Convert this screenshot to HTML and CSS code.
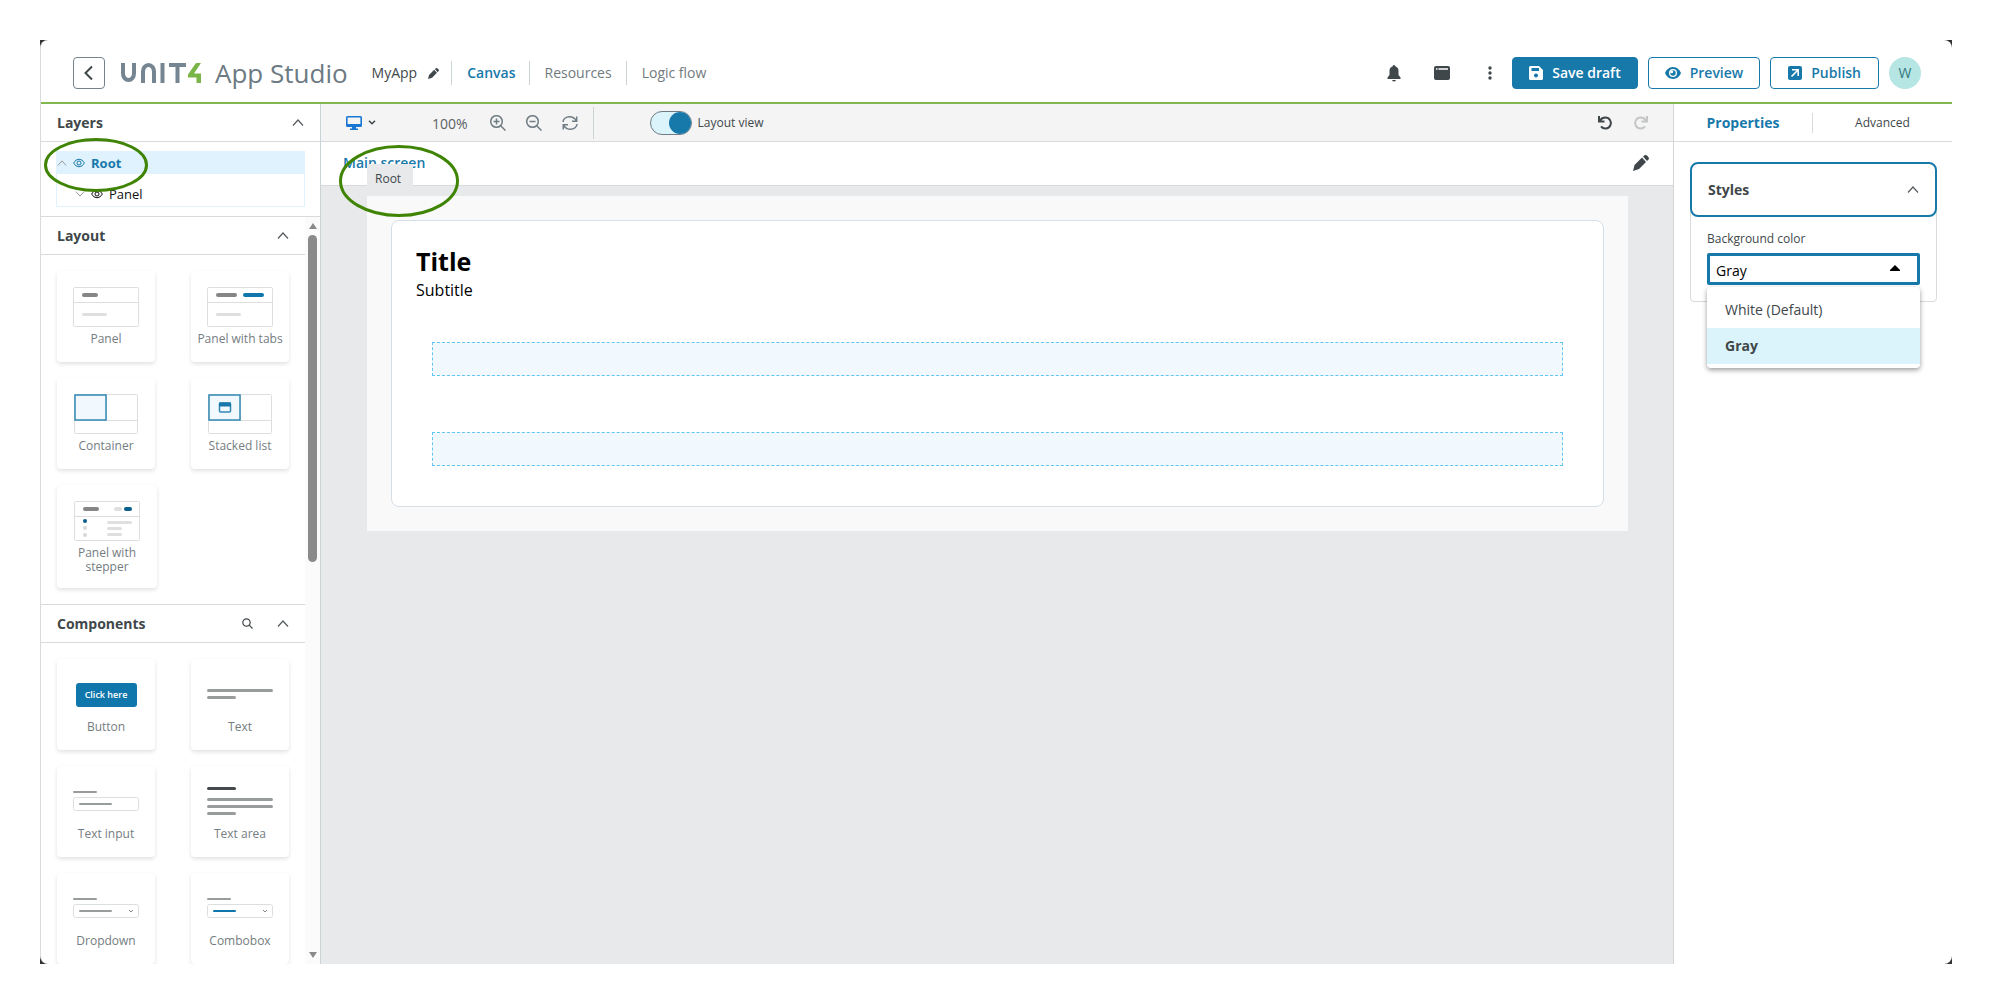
FILE: index.html
```html
<!DOCTYPE html>
<html lang="en">
<head>
<meta charset="utf-8">
<title>App Studio</title>
<link rel="stylesheet" href="styles.css">
</head>
<body>
<div class="window">
<div class="app">
  <header class="header">
    <button class="back" aria-label="Back"><svg width="12" height="16" viewBox="0 0 12 16" fill="none" stroke="#40474a" stroke-width="2"><path d="M9 1.500 2.500 8 9 14.500"/></svg></button>
    <div class="brand">
      <svg class="logo" width="82" height="20" viewBox="0 0 82 20" fill="none" stroke="#758592" stroke-width="4" role="img" aria-label="Unit4"><path d="M3 0v10.500a5.500 6.500 0 0 0 11 0V0M23 20V8.500a5.500 6.500 0 0 1 11 0V20M42.500 0v20M49 2h17M57.500 2v18"/><path fill="#7ab547" stroke="none" d="M76 0h5L74 10.500h7V20h-4.500v-5.500H68V11.500Z"/></svg>
      <span class="product">App Studio</span>
    </div>
    <span class="appname">MyApp</span>
    <button class="icon rename" aria-label="Rename"><svg width="11" height="11" viewBox="0 0 16 16" fill="#40474a"><path d="M0 16 1.500 10 9 2.500 13 7 6 14ZM10 1.500 11.500.300Q13-.500 14.500 1L15.300 2Q16.500 3.500 15.500 4.500L14 6Z"/></svg></button>
    <nav class="nav">
      <a class="active" href="#canvas">Canvas</a><a href="#resources">Resources</a><a href="#logic">Logic flow</a>
    </nav>
    <div class="actions">
      <button class="icon" aria-label="Notifications"><svg width="16" height="18" viewBox="0 0 16 18" fill="#40474a"><path d="M8 1q1.500 0 1.500 1.500C11.800 3.200 12.500 5 12.500 7v4l2 2.500V15h-13v-1.500l2-2.500V7c0-2 .7-3.800 3-4.500Q6.500 1 8 1ZM6 16h4q-.500 1.500-2 1.500T6 16Z"/></svg></button>
      <button class="icon" aria-label="Window"><svg width="16" height="16" viewBox="0 0 16 16"><rect y="1" width="16" height="14" rx="2" fill="#40474a"/><path d="M2 4h1.500M4.500 4H14" stroke="#fff" stroke-width="1.500"/></svg></button>
      <button class="icon more" aria-label="More"><svg width="4" height="16" viewBox="0 0 4 16" fill="#40474a"><circle cx="2" cy="3" r="1.700"/><circle cx="2" cy="8" r="1.700"/><circle cx="2" cy="13" r="1.700"/></svg></button>
      <button class="btn primary"><svg width="14" height="14" viewBox="0 0 14 14"><path fill="#fff" fill-rule="evenodd" d="M1.500 0H10l4 4v8.500q0 1.500-1.500 1.500h-11Q0 14 0 12.500v-11Q0 0 1.500 0ZM2.500 2v3H10V2ZM7 7.500a2 2 0 1 0 .010 0Z"/></svg>Save draft</button>
      <button class="btn preview"><svg width="16" height="14" viewBox="0 0 16 14"><path fill="#1779aa" d="M8 1C4 1 1.200 4 0 7c1.200 3 4 6 8 6s6.800-3 8-6C14.800 4 12 1 8 1Z"/><circle cx="8" cy="7" r="4" fill="#fff"/><circle cx="8" cy="7" r="2.700" fill="#1779aa"/><circle cx="6.700" cy="5.700" r="1.500" fill="#fff"/></svg>Preview</button>
      <button class="btn"><svg width="14" height="14" viewBox="0 0 14 14"><rect width="14" height="14" rx="2" fill="#1779aa"/><path d="M4 3.800h6.200V10M10 4 3.500 10.500" fill="none" stroke="#fff" stroke-width="1.600"/></svg>Publish</button>
      <button class="avatar">W</button>
    </div>
  </header>

  <main class="workspace">
    <aside class="sidebar">
      <div class="section-head layers-head"><h2>Layers</h2><button class="icon" aria-label="Collapse layers"><svg class="chev" viewBox="0 0 12 7"><path d="M1 6.500 6 1l5 5.500"/></svg></button></div>
      <div class="layers">
        <ul class="tree">
          <li class="node selected"><svg class="caret" viewBox="0 0 12 7"><path d="M1 6.500 6 1l5 5.500"/></svg><svg class="eye" viewBox="0 0 12 10"><path d="M.600 5Q2.500 1.200 6 1.200T11.400 5Q9.500 8.800 6 8.800T.600 5Z"/><circle cx="6" cy="5" r="2"/></svg>Root</li>
          <li class="node child"><svg class="caret" viewBox="0 0 12 7"><path d="M1 .500 6 6l5-5.500"/></svg><svg class="eye" viewBox="0 0 12 10"><path d="M.600 5Q2.500 1.200 6 1.200T11.400 5Q9.500 8.800 6 8.800T.600 5Z"/><circle cx="6" cy="5" r="2"/></svg>Panel</li>
        </ul>
        <svg class="mark mark-tree" viewBox="0 0 104 54"><ellipse cx="52" cy="27" rx="50.500" ry="25.500"/></svg>
      </div>
      <div class="scroller">
        <div class="palette">
          <div class="section-head"><h2>Layout</h2><button class="icon" aria-label="Collapse layout"><svg class="chev" viewBox="0 0 12 7"><path d="M1 6.500 6 1l5 5.500"/></svg></button></div>
          <div class="tiles">
            <div class="tile"><svg viewBox="0 0 66 40"><g class="frame"><rect x=".5" y=".5" width="65" height="39" rx="1"/><path d="M0 15.500h66"/></g><path class="g4" d="M11 8h12"/><path class="l3" d="M10.500 27.500h22"/></svg><span>Panel</span></div>
            <div class="tile"><svg viewBox="0 0 66 40"><g class="frame"><rect x=".5" y=".5" width="65" height="39" rx="1"/><path d="M0 15.500h66"/></g><path class="g4" d="M11 8h17"/><path class="b4" d="M38 8h17"/><path class="l3" d="M10.500 27.500h22"/></svg><span>Panel with tabs</span></div>
            <div class="tile"><svg viewBox="0 0 66 40"><g class="frame"><path d="M33.500 0v26"/><rect x="1.500" y=".5" width="63" height="39" rx="1"/><path d="M2 26.500h62"/></g><rect class="cell" x="2" y="1" width="31" height="25"/></svg><span>Container</span></div>
            <div class="tile"><svg viewBox="0 0 66 40"><g class="frame"><path d="M33.500 0v26"/><rect x="1.500" y=".5" width="63" height="39" rx="1"/><path d="M2 26.500h62"/></g><rect class="cell" x="2" y="1" width="31" height="25"/><rect class="cell" x="12.500" y="9" width="11" height="9" rx="1"/><path d="M12 10.500h12" stroke="#1779aa" stroke-width="4"/></svg><span>Stacked list</span></div>
            <div class="tile tall"><svg viewBox="0 0 66 40"><g class="frame"><rect x=".5" y=".5" width="65" height="39" rx="1"/><path d="M0 15.500h66"/></g><path class="g4" d="M11 8h12"/><path class="l4" d="M42 8h4"/><path class="n4" d="M52 8h4"/><circle cx="11" cy="20" r="2" fill="#0b5f8c"/><circle cx="11" cy="27" r="2" fill="#d8d8d8"/><circle cx="11" cy="34" r="2" fill="#d8d8d8"/><path class="l3" d="M34.500 21.500h22M34.500 27.500h12M34.500 33.500h12"/></svg><span>Panel with stepper</span></div>
          </div>
          <div class="section-head components-head"><h2>Components</h2><button class="icon search" aria-label="Search components"><svg width="11" height="11" viewBox="0 0 11 11" fill="none" stroke="#40474a" stroke-width="1.200"><circle cx="4.500" cy="4.500" r="3.700"/><path d="m7.200 7.200 3.300 3.300"/></svg></button><button class="icon" aria-label="Collapse components"><svg class="chev" viewBox="0 0 12 7"><path d="M1 6.500 6 1l5 5.500"/></svg></button></div>
          <div class="tiles">
            <div class="tile"><div class="art"><span class="sample">Click here</span></div><span>Button</span></div>
            <div class="tile"><svg viewBox="0 0 66 40"><path class="t3" d="M1.500 15.500h63M1.500 22.500h26"/></svg><span>Text</span></div>
            <div class="tile"><svg viewBox="0 0 66 40"><path class="t2" d="M1 10h22M7 22h31"/><rect class="frame" x=".5" y="15.500" width="65" height="13" rx="2"/></svg><span>Text input</span></div>
            <div class="tile"><svg viewBox="0 0 66 40"><path class="t3 dark" d="M1.500 6.500h26"/><path class="t3" d="M1.500 17.500h63M1.500 24.500h63M1.500 31.500h26"/></svg><span>Text area</span></div>
            <div class="tile"><svg viewBox="0 0 66 40"><path class="t2" d="M1 10h22M7 22h31"/><rect class="frame" x=".5" y="15.500" width="65" height="13" rx="2"/><path class="mini" d="m56 21 2 2 2-2"/></svg><span>Dropdown</span></div>
            <div class="tile"><svg viewBox="0 0 66 40"><path class="t2" d="M1 10h22"/><path class="t2 blue" d="M7 22h21"/><rect class="frame" x=".5" y="15.500" width="65" height="13" rx="2"/><path class="mini" d="m56 21 2 2 2-2"/></svg><span>Combobox</span></div>
          </div>
        </div>
        <div class="rail">
          <svg width="8" height="6" viewBox="0 0 8 6"><path d="M4 0 8 6H0Z"/></svg>
          <div class="track"><div class="thumb"></div></div>
          <svg width="8" height="6" viewBox="0 0 8 6"><path d="M0 0h8L4 6Z"/></svg>
        </div>
      </div>
    </aside>

    <section class="stage">
      <div class="toolbar">
        <button class="icon device" aria-label="Device"><svg width="16" height="14" viewBox="0 0 16 14"><path fill="#1976d2" fill-rule="evenodd" d="M1.500 0h13Q16 0 16 1.500v8q0 1.500-1.500 1.500H10v1.500h2V14H4v-1.500h2V11H1.500Q0 11 0 9.500v-8Q0 0 1.500 0ZM1.600 1.600v6.400h12.800V1.600Z"/></svg><svg width="8" height="5" viewBox="0 0 8 5" fill="none" stroke="#40474a" stroke-width="1.500"><path d="m1 .8 3 3 3-3"/></svg></button>
        <span class="zoom">100%</span>
        <button class="icon" aria-label="Zoom in"><svg class="line" viewBox="0 0 16 16"><circle cx="6.500" cy="6.500" r="5.800"/><path d="m10.700 10.700 4.800 4.800M3.500 6.500h6M6.500 3.500v6"/></svg></button>
        <button class="icon" aria-label="Zoom out"><svg class="line" viewBox="0 0 16 16"><circle cx="6.500" cy="6.500" r="5.800"/><path d="m10.700 10.700 4.800 4.800M3.500 6.500h6"/></svg></button>
        <button class="icon refresh" aria-label="Reset zoom"><svg class="line" viewBox="0 0 16 16"><path d="M1 7C1 4 4 1.700 7.500 1.700c2.800 0 5.200 1.300 6.800 4M14.700 1.500v4.700H10M15 9c0 3-3 5.300-6.500 5.300-2.800 0-5.200-1.300-6.800-4M1.300 14.500V9.800H6"/></svg></button>
        <label class="switch"><input type="checkbox" checked><span class="slot"></span>Layout view</label>
        <div class="history">
          <button class="icon" aria-label="Undo"><svg width="16" height="16" viewBox="0 0 16 16" fill="none" stroke="#40474a" stroke-width="2"><path d="M3 5.500C4.300 3.300 6.300 2.500 8.500 2.500a5.500 5.500 0 1 1-4.500 8.800M2 1v5.500h5.500"/></svg></button>
          <button class="icon" aria-label="Redo" disabled><svg width="16" height="16" viewBox="0 0 16 16" fill="none" stroke="#c4c6c7" stroke-width="2"><path d="M13 5.500C11.700 3.300 9.700 2.500 7.500 2.500a5.500 5.500 0 1 0 4.500 8.800M14 1v5.500H8.500"/></svg></button>
        </div>
      </div>
      <div class="screens">
        <a href="#main">Main screen</a>
        <button class="icon" aria-label="Edit screen"><svg width="16" height="16" viewBox="0 0 16 16" fill="#40474a"><path d="M0 16 1.500 10 9 2.500 13 7 6 14ZM10 1.500 11.500.300Q13-.500 14.500 1L15.300 2Q16.500 3.500 15.500 4.500L14 6Z"/></svg></button>
      </div>
      <div class="board">
        <div class="root">
          <span class="tag">Root</span>
          <svg class="mark mark-tag" viewBox="0 0 120 72"><ellipse cx="60" cy="36" rx="58.500" ry="34.500"/></svg>
          <article class="panel">
            <h1>Title</h1>
            <p>Subtitle</p>
            <div class="drop"></div>
            <div class="drop"></div>
          </article>
        </div>
      </div>
    </section>

    <aside class="props">
      <nav class="tabs"><a class="on" href="#properties">Properties</a><a href="#advanced">Advanced</a></nav>
      <div class="group">
        <button class="group-head">Styles<svg class="chev" viewBox="0 0 12 7"><path d="M1 6.500 6 1l5 5.500"/></svg></button>
        <div class="group-body">
          <label for="bg">Background color</label>
          <div class="field">
            <select id="bg"><option>White (Default)</option><option selected>Gray</option></select>
            <svg class="arrow" width="10" height="6" viewBox="0 0 10 6"><path d="M5 0 10 5v1H0V5Z"/></svg>
            <ul class="menu"><li>White (Default)</li><li class="picked">Gray</li></ul>
          </div>
        </div>
      </div>
    </aside>
  </main>
</div>
</div>
</body>
</html>
```
FILE: styles.css
```css
* { box-sizing: border-box; }
body { margin: 0; background: #fff; color: #40474a; font: 14px/20px "Open Sans", "Noto Sans", sans-serif; }
h1, h2, p, ul { margin: 0; padding: 0; }
ul { list-style: none; }
a { color: inherit; text-decoration: none; }
button { font: inherit; color: inherit; cursor: pointer; }
svg { display: block; flex: none; }
.icon { display: flex; align-items: center; padding: 0; border: 0; background: none; }
.chev { width: 12px; height: 7px; fill: none; stroke: #555b5e; stroke-width: 1.2; }

.window { height: 100vh; padding: 40px; background: linear-gradient(#333, #333) content-box, #fff; }
.app { height: 100%; display: flex; flex-direction: column; overflow: hidden; border-radius: 8px; background: #fff; border-left: 1px solid #d8dadb; }

.header { flex: none; display: flex; align-items: center; height: 64px; padding: 10px 31px 6px 32px; border-bottom: 2px solid #82b650; }
.back { width: 32px; height: 32px; display: grid; place-items: center; padding: 0; background: #fff; border: 1px solid #75838c; border-radius: 4px; }
.brand { display: flex; align-items: center; gap: 13px; margin-left: 15px; }
.product { font-size: 26px; line-height: 32px; color: #6b7a83; }
.appname { margin-left: 24px; }
.rename { margin-left: 11px; }
.nav { display: flex; margin-left: 12px; line-height: 24px; color: #717b80; }
.nav a { padding: 0 14px 0 15px; border-left: 1px solid #ccd3d7; }
.nav .active { padding-right: 13px; color: #1779aa; font-weight: 600; }
.actions { display: flex; align-items: center; margin-left: auto; gap: 10px; }
.actions .icon { margin-right: 22px; }
.actions .more { margin: 0 10px 0 6px; }
.btn { display: flex; align-items: center; gap: 9px; height: 32px; padding: 0 17px; font-weight: 600; color: #1779aa; background: #fff; border: 1px solid #1779aa; border-radius: 4px; }
.primary { padding: 0 16px; background: #1779aa; color: #fff; }
.preview { padding: 0 16px; }
.avatar { width: 32px; height: 32px; padding: 0; border: 0; border-radius: 50%; background: #b5e6e4; color: #33787d; }

.workspace { flex: 1; min-height: 0; display: grid; grid-template-columns: 280px minmax(0, 1fr) 279px; }

.sidebar { display: flex; flex-direction: column; min-height: 0; border-right: 1px solid #ccd3d7; }
.section-head { flex: none; display: flex; align-items: center; height: 38px; padding: 0 16px; border-bottom: 1px solid #d8dadb; }
.section-head h2 { margin-right: auto; font-size: 14px; line-height: 20px; font-weight: 700; }
.layers { flex: none; position: relative; padding: 9px 15px; border-bottom: 1px solid #d8dadb; }
.tree { border: 1px solid #dff2fd; font-size: 13px; color: #111; }
.node { display: flex; align-items: center; gap: 6px; height: 22px; }
.node.selected { background: #dff2fd; color: #1779aa; font-weight: 700; }
.node.child { height: 32px; padding: 8px 0 0 18px; }
.caret { width: 10px; height: 6px; fill: none; stroke: #999; stroke-width: 1.2; }
.eye { width: 12px; height: 10px; fill: none; stroke: currentColor; }
.mark { position: absolute; z-index: 3; fill: none; stroke: #3f8405; stroke-width: 3; pointer-events: none; }
.mark-tree { width: 104px; height: 54px; left: 3px; top: -4px; }

.scroller { flex: 1; min-height: 0; display: flex; overflow: hidden; }
.palette { flex: 1; min-width: 0; }
.tiles { display: grid; grid-template-columns: 98px 98px; gap: 16px 36px; padding: 16px; }
.tile { min-height: 91px; padding: 16px; border-radius: 4px; background: #fff; box-shadow: 0 2px 4px rgba(0, 0, 0, .12); display: flex; flex-direction: column; align-items: center; font-size: 12px; line-height: 14px; text-align: center; color: #747d81; }
.tile > svg, .art { width: 66px; height: 40px; flex: none; fill: none; }
.tile > span { margin: 5px -12px 0; white-space: nowrap; }
.tile.tall { width: 100px; min-height: 103px; padding-bottom: 12px; }
.tile.tall > span { margin: 5px 0 0; white-space: normal; }
.components-head { height: 39px; border-top: 1px solid #d8dadb; }
.search { margin-right: 24px; }
.art { display: grid; place-items: center; }
.sample { width: 61px; padding: 5px 0; font-size: 9px; line-height: 14px; font-weight: 600; color: #fff; background: #1077ad; border-radius: 3px; white-space: nowrap; }
.frame { stroke: #dcdedf; fill: none; }
.cell { stroke: #3288b3; fill: #f1f9ff; stroke-width: 1.5; }
.g4, .l4, .b4, .n4 { stroke-width: 4; stroke-linecap: round; stroke: #868686; }
.l4, .l3 { stroke: #dfdfdf; }
.b4 { stroke: #1077ad; }
.n4 { stroke: #0b5f8c; }
.l3, .t3 { stroke-width: 3; stroke-linecap: round; }
.t3, .t2 { stroke: #999c9d; }
.t2 { stroke-width: 2; stroke-linecap: round; }
.dark { stroke: #44494b; }
.blue { stroke: #1077ad; }
.mini { stroke: #888; }

.rail { flex: none; width: 15px; display: flex; flex-direction: column; align-items: center; padding: 6px 0; background: #fbfbfb; fill: #8a8a8a; }
.track { flex: 1; width: 9px; padding: 6px 0; }
.thumb { height: 46%; border-radius: 5px; background: #8a8a8a; }

.stage { display: flex; flex-direction: column; min-width: 0; background: #e7e9ea; }
.toolbar { flex: none; display: flex; align-items: center; height: 38px; padding: 0 24px 0 25px; background: #f4f4f4; border-bottom: 1px solid #d8dadb; }
.device { gap: 6px; }
.zoom { margin: 2px 22px 0 56px; color: #5c6366; }
.line { width: 16px; height: 16px; margin-right: 20px; fill: none; stroke: #6f7c83; stroke-width: 1.5; }
.refresh { height: 32px; border-right: 1px solid #ccd3d7; }
.refresh .line { margin-right: 15px; }
.switch { display: flex; align-items: center; margin-left: 56px; font-size: 12px; }
.switch input { position: absolute; opacity: 0; margin: 0; }
.slot { width: 42px; height: 24px; margin-right: 6px; border: 1px solid #6f7c83; border-radius: 12px; background: #dbf3fb; display: flex; justify-content: flex-end; }
.slot::after { content: ""; width: 22px; height: 22px; border-radius: 50%; background: #1779aa; }
.history { display: flex; gap: 20px; margin-left: auto; }
.screens { flex: none; display: flex; align-items: center; justify-content: space-between; height: 44px; padding: 0 24px 1px 22px; background: #fff; border-bottom: 1px solid #d8dadb; font-weight: 600; color: #1779aa; }
.board { flex: 1; padding: 10px 45px 10px 46px; }
.root { position: relative; padding: 24px; background: #f9f9f9; }
.tag { position: absolute; left: 0; top: -32px; padding: 5px 12px 7px 8px; background: #e7e9ea; font-size: 12px; line-height: 20px; }
.mark-tag { width: 120px; height: 72px; left: -28px; top: -51px; }
.panel { padding: 24px 40px 40px; background: #fff; border: 1px solid #d6dfe6; border-radius: 8px; color: #000; }
.panel h1 { margin-left: -16px; font-size: 25px; line-height: 33px; font-weight: 700; }
.panel p { margin: 0 0 40px -16px; font-size: 16px; line-height: 24px; }
.drop { height: 34px; background: #f1f9ff; border: 1px dashed #62c6f2; }
.drop + .drop { margin-top: 56px; }

.props { border-left: 1px solid #d3d5d6; }
.tabs { display: grid; grid-template-columns: 1fr 1fr; align-items: center; height: 38px; border-bottom: 1px solid #d8dadb; text-align: center; line-height: 20px; font-size: 12px; }
.tabs .on { font-size: 14px; font-weight: 700; color: #1779aa; border-right: 1px solid #d8dadb; }
.group { margin: 20px 15px 20px 16px; }
.group-head { position: relative; width: 100%; height: 55px; display: flex; align-items: center; justify-content: space-between; padding: 0 16px; font-weight: 700; background: #fff; border: 2px solid #1779aa; border-radius: 8px; }
.group-body { margin-top: -8px; padding: 19px 16px 16px; border: 1px solid #d8dadb; border-radius: 4px; }
.group-body label { display: block; padding-top: 1px; font-size: 12px; line-height: 18px; }
.field { position: relative; margin-top: 5px; }
select { appearance: none; display: block; width: 100%; height: 32px; padding: 2px 6px 0; border: 3px solid #1779aa; border-radius: 2px; background: #fff; color: #000; font: 14px "Open Sans", "Noto Sans", sans-serif; }
.arrow { position: absolute; right: 20px; top: 12px; }
.menu { position: absolute; z-index: 2; left: 0; right: 0; top: 34px; padding: 5px 0 4px; background: #fff; border-radius: 4px; box-shadow: 0 2px 5px rgba(0, 0, 0, .4); }
.menu li { height: 36px; padding: 0 18px; line-height: 36px; }
.picked { background: #dbf3fb; font-weight: 700; }
```
